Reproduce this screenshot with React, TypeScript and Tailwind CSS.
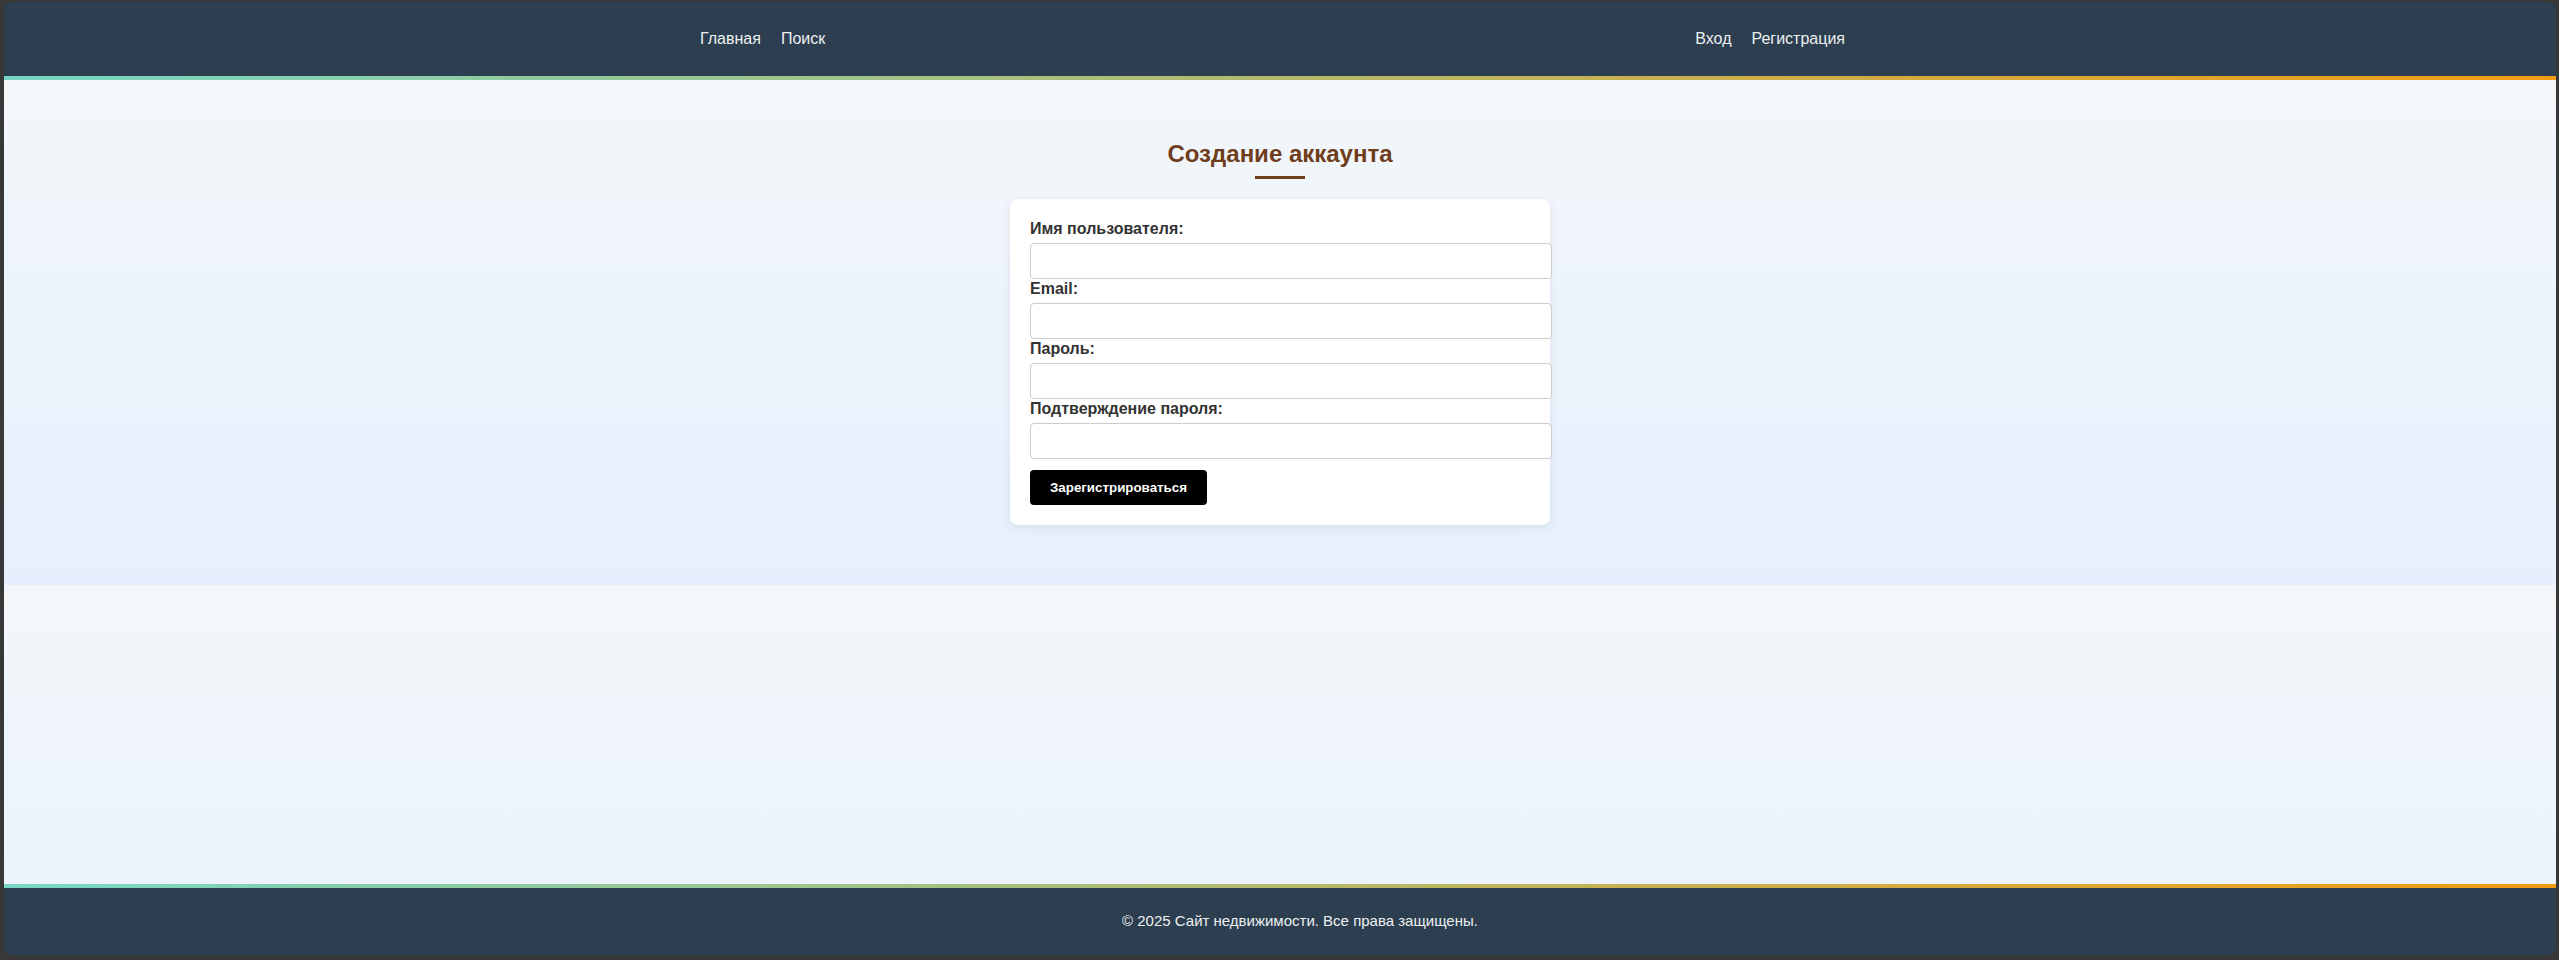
const leftLinks = ["Главная", "Поиск"];
const rightLinks = ["Вход", "Регистрация"];

const fields = [
  { id: "username", label: "Имя пользователя:", type: "text" },
  { id: "email", label: "Email:", type: "email" },
  { id: "password", label: "Пароль:", type: "password" },
  { id: "password2", label: "Подтверждение пароля:", type: "password" },
];

const GradientLine = () => (
  <div className="h-[4px] w-full shrink-0 bg-[linear-gradient(90deg,#76d7c4_0%,#f39c12_100%)]" />
);

export default function App() {
  return (
    <div className="h-[960px] bg-[#383838] pt-[2px] pr-[3px] pb-[5px] pl-[4px] font-['Liberation_Sans',Arial,sans-serif]">
      <div className="flex h-full flex-col overflow-hidden rounded-[8px]">
        <header className="flex h-[74px] shrink-0 items-center bg-[#2c3e50]">
          <nav className="mx-auto flex w-[1200px] items-center justify-between pl-5 pr-[35px] text-[16px] text-[#ecf0f1]">
            <div className="flex items-center gap-5">
              {leftLinks.map((l) => (
                <a key={l} href="#" className="leading-[18px]">
                  {l}
                </a>
              ))}
            </div>
            <div className="flex items-center gap-5">
              {rightLinks.map((l) => (
                <a key={l} href="#" className="leading-[18px]">
                  {l}
                </a>
              ))}
            </div>
          </nav>
        </header>
        <GradientLine />

        <main className="flex shrink-0 flex-col items-center bg-[linear-gradient(180deg,#f3f7fa_0%,#e6effd_100%)] pt-[60px] pb-[60px]">
          <h2 className="text-[24px] font-bold leading-[28px] text-[#6f3d1c]">Создание аккаунта</h2>
          <div className="mt-[8px] h-[3px] w-[50px] bg-[#6f3d1c]" />
          <form className="mt-[20px] w-[540px] rounded-[8px] bg-white p-5 shadow-[0_2px_10px_rgba(0,0,0,0.08)]">
            {fields.map((f) => (
              <div key={f.id}>
                <label htmlFor={f.id} className="mb-[5px] block text-[16px] font-bold leading-[19px] text-[#333]">
                  {f.label}
                </label>
                <input
                  id={f.id}
                  type={f.type}
                  className="block h-[36px] w-[522px] rounded-[4px] border border-[#ccc] bg-white px-[10px] text-[16px] outline-none"
                />
              </div>
            ))}
            <button
              type="button"
              className="mt-[11px] h-[35px] rounded-[4px] bg-black px-[20px] text-[13.333px] font-bold text-white"
            >
              Зарегистрироваться
            </button>
          </form>
        </main>

        <div className="flex-1 bg-[linear-gradient(180deg,#f3f7fa_0%,#ecf3fd_100%)]" />

        <GradientLine />
        <footer className="flex h-[67px] shrink-0 items-center justify-center bg-[#2c3e50] pl-10 text-[15px] text-[#ecf0f1]">
          © 2025 Сайт недвижимости. Все права защищены.
        </footer>
      </div>
    </div>
  );
}
